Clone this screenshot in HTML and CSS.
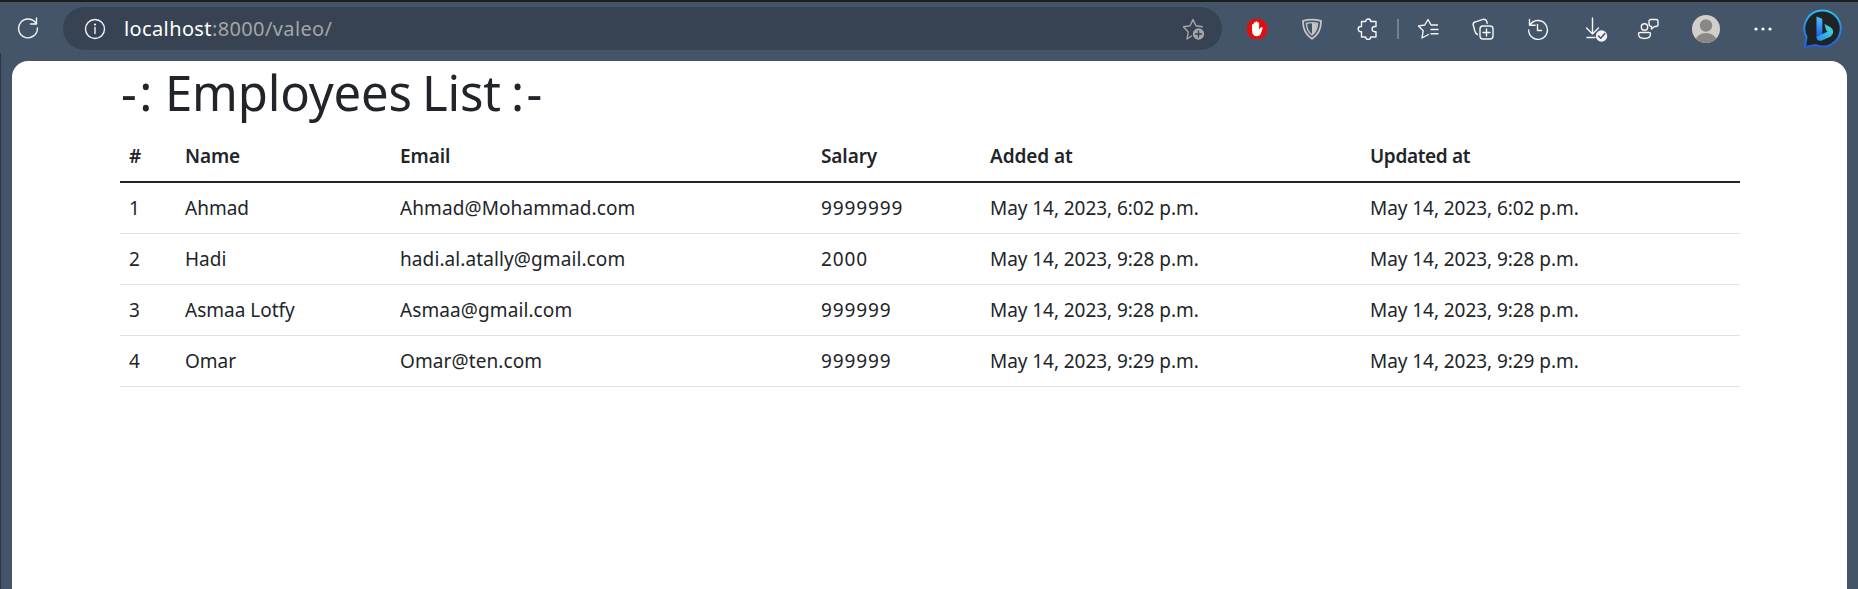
FILE: index.html
```html
<!DOCTYPE html>
<html lang="en">
<head>
<meta charset="utf-8">
<title>Employees List</title>
<link rel="stylesheet" href="styles.css">
</head>
<body>
<header class="toolbar">
  <svg class="icon reload" width="22" height="22" viewBox="0 0 22 22"><path d="M19.2 6.8A9.4 9.4 0 1 0 20.4 11M19.5 1v6h-6"/></svg>
  <div class="address">
    <svg class="icon info" width="22" height="22" viewBox="0 0 22 22"><circle cx="11" cy="11" r="9.5"/><path d="M11 9.5v6"/><circle class="fill" cx="11" cy="6.6" r="1.1"/></svg>
    <span class="url"><span class="host">localhost</span>:8000/valeo/</span>
    <svg class="icon muted add-fav" width="24" height="24" viewBox="0 0 24 24"><path d="M9.500 19l-4.500 3 1.200-7L1.500 9.800l6.500-1L11 2.600l3 6.200 6.300 1"/><circle class="fill" cx="16.500" cy="17" r="5.700"/><path class="plus" d="M16.500 14v6M13.500 17h6"/></svg>
  </div>
  <nav class="tools">
    <svg class="tool" width="22" height="22" viewBox="0 0 22 22"><path fill="#e60c0c" d="M6.500 1h9L21 6.500v9L15.500 21h-9L1 15.500v-9z"/><path fill="#fff" d="M6 12V6.500q.8-1 1.700 0V4.800q.9-1 1.800 0V3.800q.9-1 1.800 0v1q.9-1 1.800 0V11.500l1.700-2q1.300-.8 2 .2L14.500 16.500Q13 18.500 10.500 18.300 6 17.800 6 12z"/></svg>
    <svg class="icon muted shield tool" width="22" height="22" viewBox="0 0 22 22"><path stroke-width="1.800" d="M2 2.800Q11 .3 20 2.800 20.300 15 11 20.800 1.700 15 2 2.800z"/><path d="M5.500 5.300Q11 4 16.500 5.300 16.500 13 11 17 5.500 13 5.500 5.300z"/><path class="fill" d="M11 5v12Q16 13 16 5.600z"/></svg>
    <svg class="icon tool puzzle" width="22" height="22" viewBox="0 0 22 22"><path d="M4.500 3.500h4.200a2.500 2.500 0 1 1 5 0h5.300v5h-1.300a2.600 2.600 0 0 0 0 5.200h1.300v5.300h-5.300a2.500 2.500 0 0 1-5 0H4.500v-5.300h-.7a2.600 2.600 0 0 1 0-5.200h.7z"/></svg>
    <span class="divider"></span>
    <svg class="icon tool" width="22" height="22" viewBox="0 0 22 22"><path d="M11.500 16.500L5 20l1.200-7.200L1.500 8l6.200-1L11 1.500l3 5.500h6.500M14 11.500h7M14 15.700h7"/></svg>
    <svg class="icon tool" width="22" height="22" viewBox="0 0 22 22"><rect x="8" y="8" width="13" height="13" rx="3"/><path d="M14.500 11v7M11 14.500h7M5.500 16.500Q3.500 15.500 3 13.500L1.200 7Q.8 4.500 3.500 3.800l7.500-2.500q3-.6 3.800 2.200l.4 1.700"/></svg>
    <svg class="icon tool" width="22" height="22" viewBox="0 0 22 22"><path d="M2.500 1.500v5.700h5.700M3 7a9.400 9.400 0 1 1-1.400 5M10.500 6.500v6h4"/></svg>
    <svg class="icon tool download" width="24" height="26" viewBox="0 0 24 26"><path d="M7.500 1v16M1.500 11l6 6 6-6M2 20.500h8"/><circle class="fill" cx="16.500" cy="19" r="5.700"/><path class="check" d="M13.500 19l2.200 2.200 4-4.500"/></svg>
    <svg class="icon tool" width="22" height="22" viewBox="0 0 22 22"><circle cx="7.500" cy="9" r="3.200"/><path d="M3 14.500h9q1.500 0 1.500 1.500 0 4.500-6 4.500T1.500 16q0-1.500 1.500-1.500zM14 1.500h5q2 0 2 2v3q0 2-2 2h-1.500L14.500 11V8.500Q12 8 12 6V3.500q0-2 2-2z"/></svg>
    <svg class="tool avatar" width="28" height="28" viewBox="0 0 28 28"><defs><clipPath id="avatar-clip"><circle cx="14" cy="14" r="14"/></clipPath></defs><g clip-path="url(#avatar-clip)"><path fill="#d1cfcc" d="M0 0h28v28H0z"/><circle fill="#8b8784" cx="14" cy="10.500" r="6.200"/><ellipse fill="#8b8784" cx="14" cy="26" rx="10.500" ry="8"/></g></svg>
    <svg class="tool" width="22" height="22" viewBox="0 0 22 22"><g fill="#fff"><circle cx="4" cy="11" r="1.600"/><circle cx="11" cy="11" r="1.600"/><circle cx="18" cy="11" r="1.600"/></g></svg>
    <svg class="tool bing" width="40" height="40" viewBox="0 0 40 40"><defs><linearGradient id="ring" x2="0" y2="1"><stop stop-color="#27bdf0"/><stop offset="1" stop-color="#245cdf"/></linearGradient><linearGradient id="stem" x2="0" y2="1"><stop stop-color="#48c5fc"/><stop offset="1" stop-color="#1c58e5"/></linearGradient><linearGradient id="bowl" x1="1" x2="0" y2="1"><stop stop-color="#4be4d0"/><stop offset="1" stop-color="#2389f5"/></linearGradient></defs><path fill="#202326" stroke="url(#ring)" stroke-width="2" d="M20 1.500A18 18 0 1 1 12.500 36L2 38l1.500-10A18 18 0 0 1 20 1.500z"/><path fill="url(#stem)" d="M13.500 7.500l5 2q.8.400.8 1.500V26l-5.800 3z"/><path fill="url(#bowl)" d="M21.500 15l6 3.200q2.700 1.500 2.700 4.600 0 3-2.500 4.700L19 31.500q-5 1.500-5.500-3.500l11-5.500-1.500-1.500z"/></svg>
  </nav>
</header>
<main class="page">
  <h1 class="title"><span class="mark">-:</span> Employees List <span class="mark">:-</span></h1>
  <table class="employees">
    <colgroup><col class="c-id"><col class="c-name"><col class="c-email"><col class="c-salary"><col class="c-added"><col></colgroup>
    <thead><tr><th>#</th><th>Name</th><th>Email</th><th>Salary</th><th>Added at</th><th class="wide">Updated at</th></tr></thead>
    <tbody>
      <tr><td>1</td><td>Ahmad</td><td class="email">Ahmad@Mohammad.com</td><td class="num">9999999</td><td class="date">May 14, 2023, 6:02 p.m.</td><td class="date">May 14, 2023, 6:02 p.m.</td></tr>
      <tr><td>2</td><td>Hadi</td><td class="email">hadi.al.atally@gmail.com</td><td class="num">2000</td><td class="date">May 14, 2023, 9:28 p.m.</td><td class="date">May 14, 2023, 9:28 p.m.</td></tr>
      <tr><td>3</td><td>Asmaa Lotfy</td><td class="email">Asmaa@gmail.com</td><td class="num">999999</td><td class="date">May 14, 2023, 9:28 p.m.</td><td class="date">May 14, 2023, 9:28 p.m.</td></tr>
      <tr><td>4</td><td>Omar</td><td class="email">Omar@ten.com</td><td class="num">999999</td><td class="date">May 14, 2023, 9:29 p.m.</td><td class="date">May 14, 2023, 9:29 p.m.</td></tr>
    </tbody>
  </table>
</main>
</body>
</html>
```
FILE: styles.css
```css
* { box-sizing: border-box; }
body {
  margin: 0;
  height: 589px;
  display: flex;
  flex-direction: column;
  overflow: hidden;
  background: linear-gradient(#2e3744, #2e3744) 0 53px / 1px 100% no-repeat, #455569;
  border-top: 2px solid #1b1d1f;
  font-family: "Noto Sans", sans-serif;
  color: #212529;
}
.toolbar { height: 59px; flex: none; display: flex; align-items: flex-start; padding: 5px 12px 0 17px; }
.icon { fill: none; stroke: #f2f4f6; stroke-width: 1.4; stroke-linejoin: round; stroke-linecap: round; flex: none; }
.icon .fill { fill: #f2f4f6; stroke: none; }
.muted { stroke: #a5a5a5; }
.muted .fill { fill: #a5a5a5; }
.shield { stroke: #c6c6c6; }
.shield .fill { fill: #c6c6c6; }
.icon .plus { stroke: #374353; }
.icon .check { stroke: #455569; stroke-width: 1.6; }
.reload { margin: 10px 24px 0 0; }
.address { flex: none; width: 1159px; height: 43px; border-radius: 22px; background: #374353; display: flex; align-items: center; padding: 0 16px 0 21px; }
.url { margin-left: 18px; flex: 1; font-size: 20px; color: #a5a5a5; letter-spacing: 0.38px; }
.host { color: #fff; }
.tools { flex: 1; height: 43px; margin-left: 24px; display: flex; align-items: center; }
.tool { flex: none; margin-right: 33px; }
.puzzle { margin-left: 1px; margin-right: 32px; }
.divider { width: 2px; height: 20px; background: #75808e; margin: 0 18px 0 -14px; }
.download { margin: 3px 28px 0 3px; }
.avatar { margin-right: 32px; margin-left: 0; }
.bing { margin: 0 0 0 -4px; }
.page { flex: 1; margin: 0 11px 0 12px; padding: 3px 107px 0 108px; background: #fff; border-radius: 16px 16px 0 0; }
.title { margin: 0; height: 68px; padding-left: 1px; font-size: 49px; line-height: 57px; font-weight: 400; letter-spacing: -0.15px; word-spacing: -2.5px; white-space: nowrap; }
.mark { letter-spacing: 2.5px; }
.employees { width: 1620px; table-layout: fixed; border-collapse: separate; border-spacing: 0; font-size: 19px; line-height: 28px; }
.c-id { width: 56px; }
.c-name { width: 215px; }
.c-email { width: 421px; }
.c-salary { width: 169px; }
.c-added { width: 380px; }
.employees th, .employees td { height: 51px; padding: 0 9px; text-align: left; white-space: nowrap; border-bottom: 1px solid #dee2e6; }
.employees th { font-weight: 600; padding-bottom: 1px; letter-spacing: -0.1px; border-bottom: 2px solid #212529; }
.employees .wide { letter-spacing: -0.35px; }
.employees .email { letter-spacing: 0.1px; }
.employees .num { letter-spacing: 0.9px; }
.employees .date { letter-spacing: -0.06px; }
```
